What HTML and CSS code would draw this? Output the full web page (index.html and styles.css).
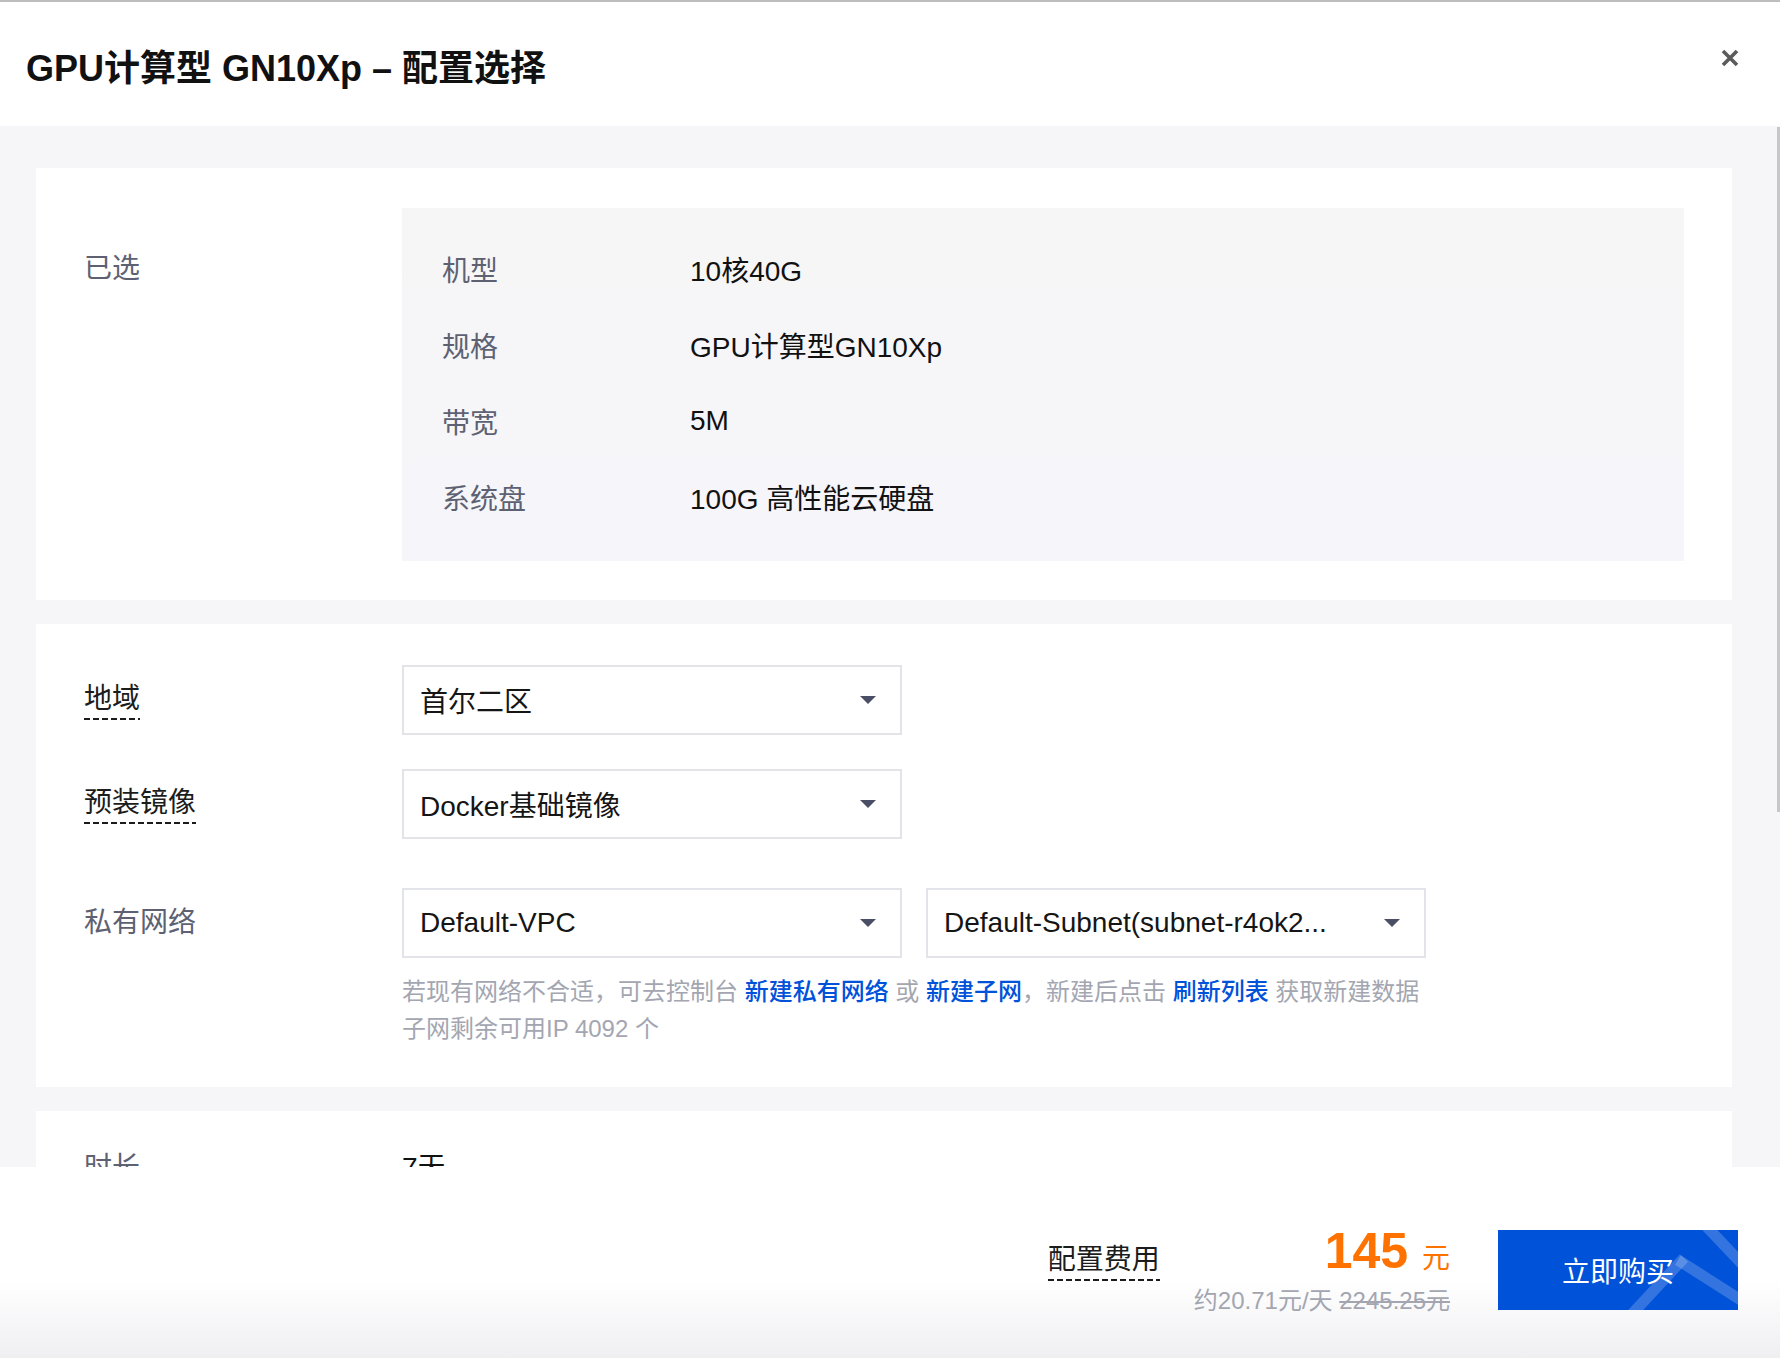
FILE: index.html
```html
<!DOCTYPE html>
<html lang="zh-CN">
<head>
<meta charset="utf-8">
<title>GPU计算型 GN10Xp – 配置选择</title>
<link rel="stylesheet" href="styles.css">
</head>
<body>
<header class="dlg-head">
  <h1 class="dlg-title">GPU计算型 GN10Xp – 配置选择</h1>
  <button class="dlg-close" aria-label="关闭">
    <svg width="18" height="18" viewBox="0 0 18 18"><path d="M2 2 L16 16 M16 2 L2 16" stroke="#5b5b5b" stroke-width="3.6" fill="none"/></svg>
  </button>
</header>

<main class="dlg-body">
  <section class="card card-sel">
    <div class="sel-label">已选</div>
    <div class="summary">
      <div class="srow"><span class="sk">机型</span><span class="sv">10核40G</span></div>
      <div class="srow"><span class="sk">规格</span><span class="sv">GPU计算型GN10Xp</span></div>
      <div class="srow"><span class="sk">带宽</span><span class="sv">5M</span></div>
      <div class="srow"><span class="sk">系统盘</span><span class="sv">100G 高性能云硬盘</span></div>
    </div>
  </section>

  <section class="card card-form">
    <div class="frow frow-1">
      <div class="flabel dark"><span class="dotted">地域</span></div>
      <div class="fctl">
        <div class="select"><span class="sel-text">首尔二区</span><i class="caret"></i></div>
      </div>
    </div>
    <div class="frow frow-2">
      <div class="flabel dark"><span class="dotted">预装镜像</span></div>
      <div class="fctl">
        <div class="select"><span class="sel-text">Docker基础镜像</span><i class="caret"></i></div>
      </div>
    </div>
    <div class="frow frow-3">
      <div class="flabel"><span>私有网络</span></div>
      <div class="fctl">
        <div class="selects">
          <div class="select"><span class="sel-text">Default-VPC</span><i class="caret"></i></div>
          <div class="select"><span class="sel-text">Default-Subnet(subnet-r4ok2...</span><i class="caret"></i></div>
        </div>
        <div class="hint">
          <div>若现有网络不合适，可去控制台 <a href="#">新建私有网络</a> 或 <a href="#">新建子网</a>，新建后点击 <a href="#">刷新列表</a> 获取新建数据</div>
          <div>子网剩余可用IP 4092 个</div>
        </div>
      </div>
    </div>
  </section>

  <section class="card card-dur">
    <div class="dur-label">时长</div>
    <div class="dur-value">7天</div>
  </section>

  <div class="scroll-thumb"></div>
</main>

<footer class="dlg-foot">
  <div class="fee-label"><span class="dotted">配置费用</span></div>
  <div class="price">
    <div class="price-main"><span class="num">145</span> <span class="unit">元</span></div>
    <div class="price-sub">约20.71元/天 <s>2245.25元</s></div>
  </div>
  <button class="buy">
    <span class="buy-text">立即购买</span>
    <svg class="buy-deco" width="240" height="80" viewBox="0 0 240 80">
      <path d="M134 84 L186 28" stroke="rgba(255,255,255,0.2)" stroke-width="11" fill="none"/>
      <path d="M180 30 L246 72" stroke="rgba(255,255,255,0.2)" stroke-width="11" fill="none"/>
      <path d="M208 -4 L246 36" stroke="rgba(255,255,255,0.2)" stroke-width="11" fill="none"/>
    </svg>
  </button>
</footer>
</body>
</html>
```

FILE: styles.css
```css
* { box-sizing: border-box; }

html, body {
  margin: 0;
  padding: 0;
}

body {
  height: 1358px;
  overflow: hidden;
  display: flex;
  flex-direction: column;
  border-top: 2px solid #bdbdbd;
  background: #fff;
  color: #141414;
  font-family: "Liberation Sans", "Noto Sans CJK SC", sans-serif;
}

/* ---------- header ---------- */
.dlg-head {
  flex: none;
  height: 124px;
  display: flex;
  align-items: center;
  padding: 9px 41px 0 26px;
  background: #fff;
}

.dlg-title {
  flex: 1;
  margin: 0;
  font-size: 36px;
  line-height: 44px;
  font-weight: 600;
  color: #111;
}

.dlg-close {
  align-self: flex-start;
  margin-top: 38px;
  width: 18px;
  height: 18px;
  padding: 0;
  border: 0;
  background: none;
  display: block;
}
.dlg-close svg { display: block; }

/* ---------- body ---------- */
.dlg-body {
  flex: 1;
  min-height: 0;
  position: relative;
  overflow: hidden;
  display: flex;
  flex-direction: column;
  gap: 24px;
  padding: 42px 48px 0 36px;
  background: #f6f6f8;
}

.card {
  flex: none;
  background: #fff;
  padding: 40px 48px;
}

/* selected summary */
.card-sel {
  display: flex;
  padding-bottom: 39px;
}

.sel-label {
  flex: none;
  width: 318px;
  padding-top: 23px;
  font-size: 28px;
  line-height: 76px;
  color: #5d6172;
}

.summary {
  flex: 1;
  padding: 23px 40px 26px;
  background: linear-gradient(#f6f6f6, #f6f5fa);
}

.srow {
  display: flex;
  align-items: center;
  height: 76px;
  font-size: 28px;
}

.sk {
  flex: none;
  width: 248px;
  color: #5d6172;
}

.sv { color: #111; }

/* form card */
.card-form {
  padding: 41px 48px 40px;
}

.frow { display: flex; }
.frow-1 { margin-bottom: 34px; }
.frow-2 { margin-bottom: 49px; }

.flabel {
  flex: none;
  width: 318px;
  height: 70px;
  display: flex;
  align-items: center;
  font-size: 28px;
  line-height: 30px;
  color: #5d6172;
}
.flabel.dark { color: #1c1c1c; }

.dotted {
  display: inline-block;
  padding: 4px 0 6px;
  background-image: linear-gradient(to right, #1c1c1c 0 6px, transparent 6px 9px);
  background-size: 9px 2px;
  background-repeat: repeat-x;
  background-position: left bottom;
}

.fctl { flex: 1; }

.selects {
  display: flex;
  gap: 24px;
}

.select {
  width: 500px;
  height: 70px;
  display: flex;
  align-items: center;
  justify-content: space-between;
  padding: 0 24px 0 16px;
  border: 2px solid #e3e4ea;
  background: #fff;
  font-size: 28px;
  color: #151515;
}

.sel-text {
  white-space: nowrap;
  overflow: hidden;
}

.caret {
  flex: none;
  width: 0;
  height: 0;
  margin-left: 16px;
  border-left: 8px solid transparent;
  border-right: 8px solid transparent;
  border-top: 8px solid #4b4f66;
}

.hint {
  margin-top: 15px;
  font-size: 24px;
  line-height: 37px;
  color: #a3a6b1;
}

.hint a {
  color: #0052d9;
  font-weight: 500;
  text-decoration: none;
}

/* duration card */
.card-dur {
  display: flex;
  height: 300px;
  font-size: 28px;
  line-height: 34px;
}

.dur-label {
  flex: none;
  width: 318px;
  color: #5d6172;
}

.dur-value { color: #111; }

/* overlay scrollbar thumb */
.scroll-thumb {
  position: absolute;
  right: 0;
  top: 1px;
  width: 3px;
  height: 685px;
  background: #c6c6cc;
}

/* ---------- footer ---------- */
.dlg-foot {
  flex: none;
  height: 191px;
  display: flex;
  justify-content: flex-end;
  align-items: flex-start;
  padding-right: 42px;
  background: linear-gradient(to bottom, #fff 0%, #fff 60%, #efeff2 100%);
}

.fee-label {
  margin-top: 74px;
  margin-right: 34px;
  font-size: 28px;
  line-height: 30px;
  color: #1c1c1c;
}

.price {
  margin-top: 58px;
  margin-right: 48px;
  text-align: right;
}

.price-main {
  line-height: 52px;
  color: #ff7200;
  font-size: 50px;
}

.price-main .num { font-size: 50px; font-weight: 700; }
.price-main .unit { font-size: 28px; }

.price-sub {
  margin-top: 0;
  font-size: 24px;
  line-height: 32px;
  color: #a3a6b1;
}

.price-sub s { text-decoration-thickness: 2px; }

.buy {
  position: relative;
  overflow: hidden;
  margin-top: 63px;
  width: 240px;
  height: 80px;
  padding: 0;
  border: 0;
  background: #0052d9;
  color: #fff;
  font-family: inherit;
  font-size: 28px;
}

.buy-text { position: relative; }

.buy-deco {
  position: absolute;
  top: 0;
  right: 0;
}
```
